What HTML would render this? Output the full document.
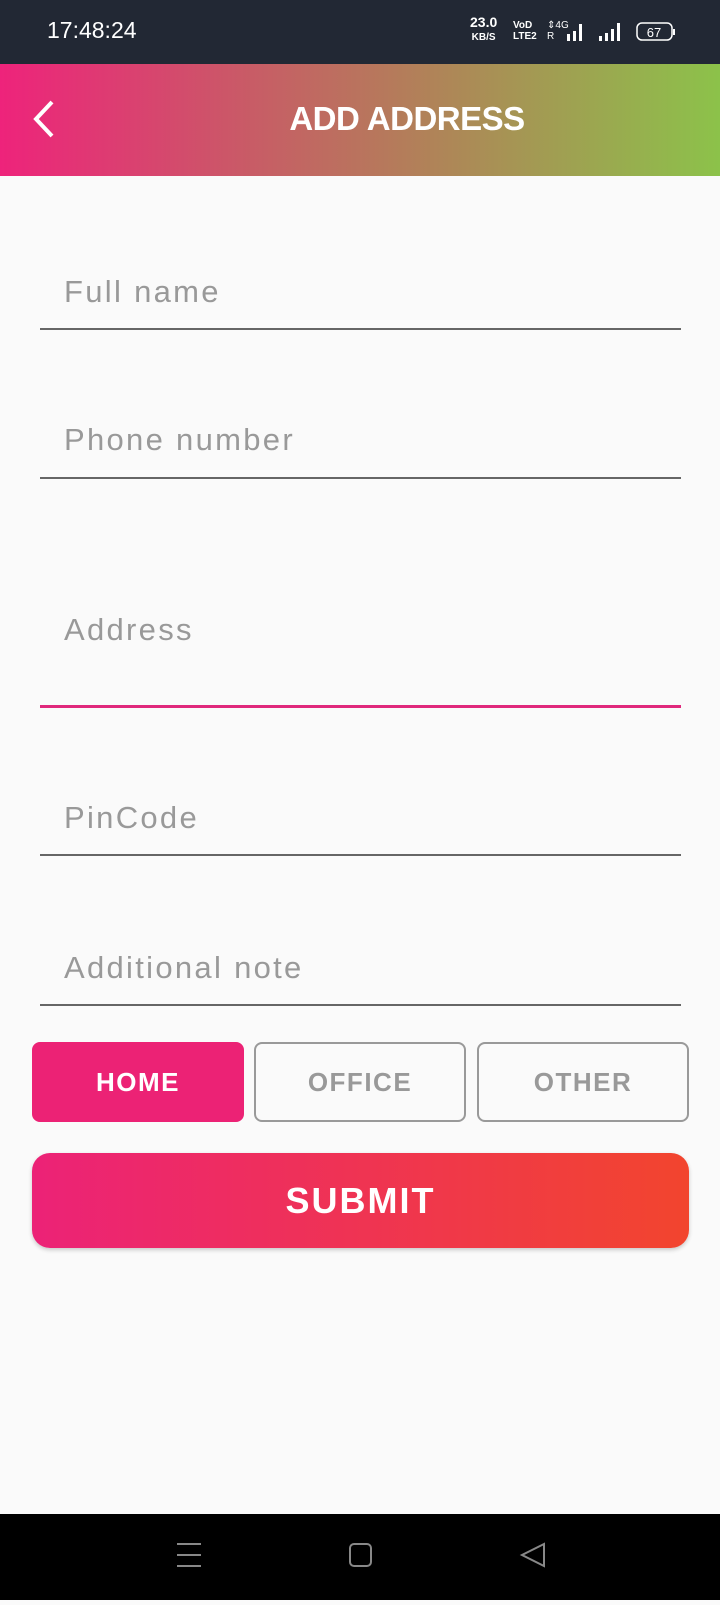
<!DOCTYPE html>
<html><head><meta charset="utf-8"><style>
*{margin:0;padding:0;box-sizing:border-box}
body{width:720px;height:1600px;background:#fafafa;position:relative;overflow:hidden;font-family:"Liberation Sans",sans-serif}
.sb{position:absolute;left:0;top:0;width:720px;height:64px;background:#222834;color:#fff}
.hd{position:absolute;left:0;top:64px;width:720px;height:112px;background:linear-gradient(90deg,#ee237b,#c85c66 35%,#b08358 60%,#8cc24a)}
.hd h1{position:absolute;left:257px;width:300px;text-align:center;top:36px;font-size:33px;color:#fff;font-weight:bold;letter-spacing:-0.5px;white-space:nowrap}
.f{position:absolute;left:40px;width:641px;border-bottom:2px solid #666}
.f span{position:absolute;left:24px;font-size:31px;color:#999;letter-spacing:2.3px}
.b{position:absolute;top:1042px;height:80px;border-radius:8px;border:2px solid #999;color:#999;font-weight:bold;font-size:26px;text-align:center;line-height:76px;letter-spacing:1.5px}
.nav{position:absolute;left:0;top:1514px;width:720px;height:86px;background:#000}
</style></head><body>
<div class="sb">
<div style="position:absolute;left:47px;top:17px;font-size:23px">17:48:24</div>
<div style="position:absolute;left:470px;top:16px;font-size:14px;font-weight:bold;line-height:13px;text-align:center">23.0<br><span style="font-size:10px">KB/S</span></div>
<div style="position:absolute;left:513px;top:20px;font-size:10px;font-weight:bold;line-height:11px">VoD<br>LTE2</div>
<div style="position:absolute;left:547px;top:20px;font-size:10px;line-height:11px">⇕4G<br>R</div>
<svg style="position:absolute;left:555px;top:20px" width="120" height="26"><rect x="12" y="14" width="3" height="7" fill="#fff"/><rect x="18" y="11" width="3" height="10" fill="#fff"/><rect x="24" y="4" width="3" height="17" fill="#fff"/><rect x="44" y="16" width="3" height="5" fill="#fff"/><rect x="50" y="13" width="3" height="8" fill="#fff"/><rect x="56" y="9" width="3" height="12" fill="#fff"/><rect x="62" y="3" width="3" height="18" fill="#fff"/><rect x="82" y="3" width="35" height="17" rx="5" fill="none" stroke="#fff" stroke-width="1.5"/><text x="99" y="17" font-size="13" fill="#fff" text-anchor="middle" font-family="Liberation Sans">67</text><rect x="118" y="9" width="2" height="6" fill="#fff"/></svg>
</div>
<div class="hd"><svg style="position:absolute;left:30px;top:35px" width="30" height="40"><path d="M22 3 L6 20 L22 37" stroke="#fff" stroke-width="4" fill="none"/></svg><h1>ADD ADDRESS</h1></div>
<div class="f" style="top:252px;height:78px"><span style="top:22px">Full name</span></div>
<div class="f" style="top:400px;height:79px"><span style="top:22px">Phone number</span></div>
<div class="f" style="top:582px;height:126px;border-bottom:3px solid #e0287c"><span style="top:30px">Address</span></div>
<div class="f" style="top:778px;height:78px"><span style="top:22px">PinCode</span></div>
<div class="f" style="top:928px;height:78px"><span style="top:22px">Additional note</span></div>
<div class="b" style="left:32px;width:212px;background:#ec2275;border-color:#ec2275;color:#fff">HOME</div>
<div class="b" style="left:254px;width:212px">OFFICE</div>
<div class="b" style="left:477px;width:212px">OTHER</div>
<div style="position:absolute;left:32px;top:1153px;width:657px;height:95px;border-radius:18px;background:linear-gradient(90deg,#ec2277,#f2452e);color:#fff;font-weight:bold;font-size:36px;text-align:center;line-height:95px;letter-spacing:2px;box-shadow:0 2px 4px rgba(0,0,0,0.2)">SUBMIT</div>
<div class="nav"><svg width="720" height="86"><path d="M177 30h24M177 41h24M177 52h24" stroke="#888" stroke-width="2"/><rect x="350" y="30" width="21" height="22" rx="4" fill="none" stroke="#888" stroke-width="2"/><path d="M544 30 L522 41 L544 52 Z" fill="none" stroke="#888" stroke-width="2"/></svg></div>
</body></html>
